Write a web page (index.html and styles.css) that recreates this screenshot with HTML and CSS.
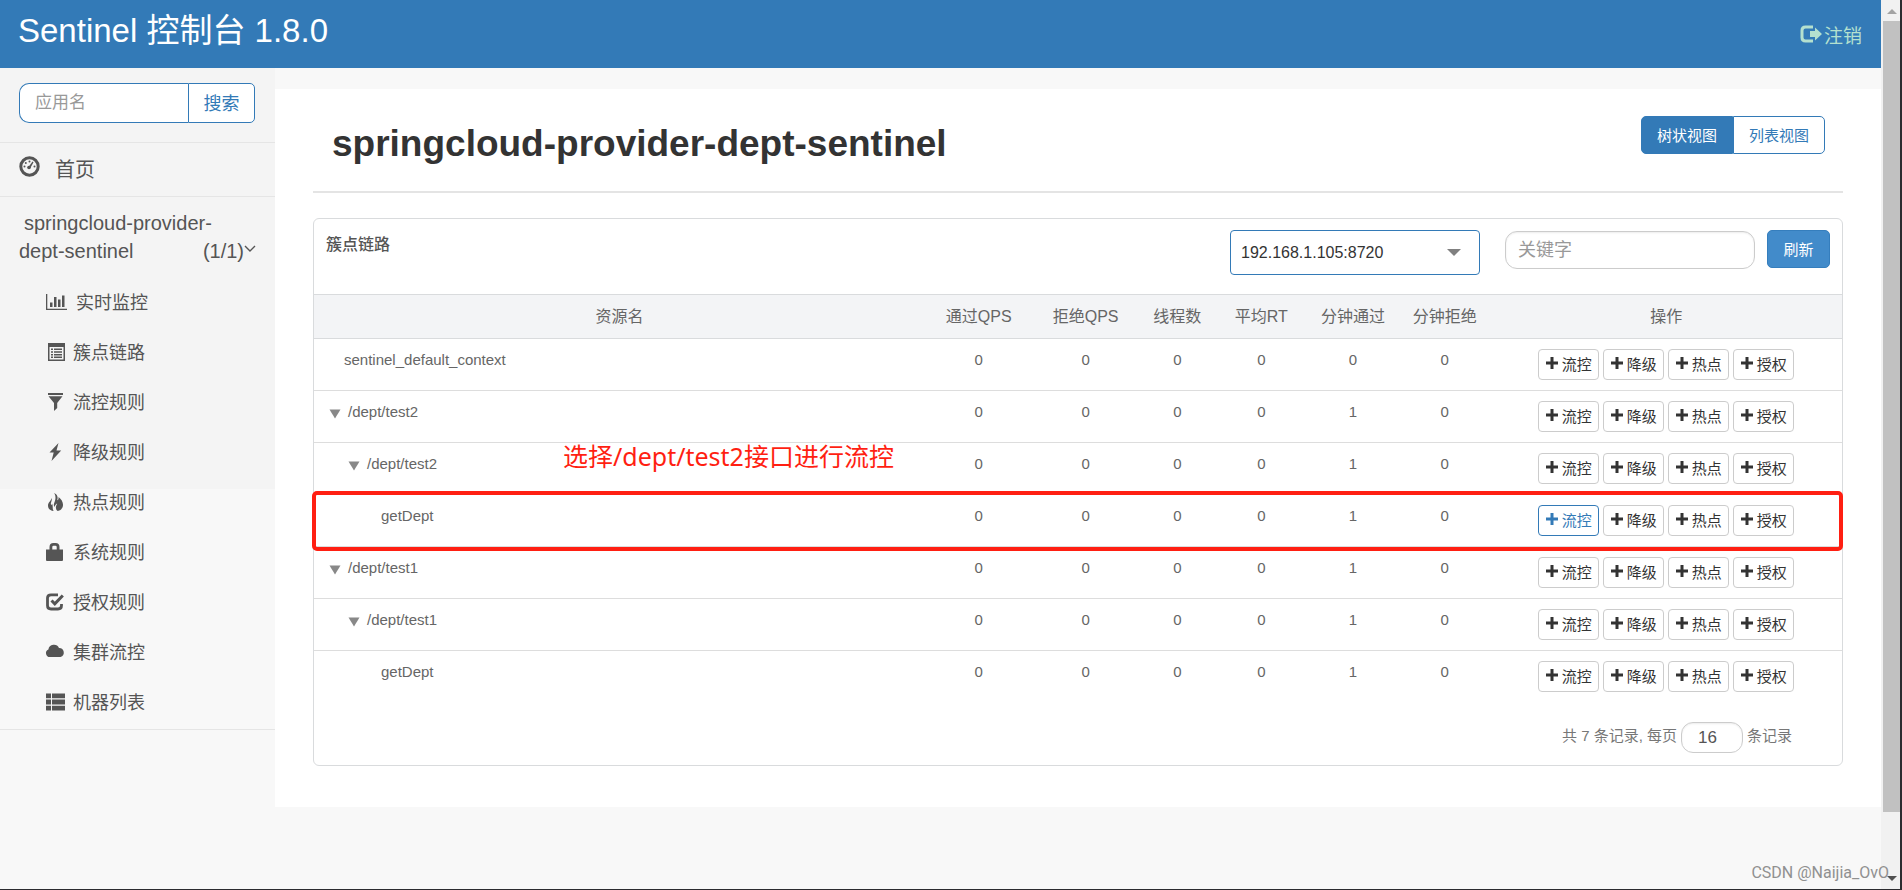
FILE: index.html
```
<!DOCTYPE html>
<html lang="zh-CN">
<head>
<meta charset="utf-8">
<title>Sentinel 控制台</title>
<link rel="stylesheet" href="styles.css">
</head>
<body>
<svg class="sprite" aria-hidden="true">
  <symbol id="plus" viewBox="0 0 12 12"><path d="M4.500 0h3v4.500H12v3H7.500V12h-3V7.500H0v-3h4.500z"/></symbol>
  <symbol id="caret" viewBox="0 0 12 10"><path d="M0.5 0.5h11L6 9.500z"/></symbol>
</svg>
<div class="window">
  <div class="page">
    <header class="topbar">
      <h1 class="brand">Sentinel 控制台 1.8.0</h1>
      <a class="logout" href="#">
        <svg class="logout-icon" viewBox="0 0 22 18"><path d="M13 2H5.500Q2 2 2 5.500v7Q2 16 5.500 16H13" fill="none" stroke="currentColor" stroke-width="3"/><path d="M10 6h5V2.500L22 9l-7 6.500V12h-5z"/></svg>注销</a>
    </header>
    <div class="body">
      <nav class="sidebar">
        <form class="search">
          <input class="search-input" type="text" placeholder="应用名" aria-label="应用名">
          <button class="search-btn" type="button">搜索</button>
        </form>
        <a class="home" href="#">
          <svg class="home-icon" viewBox="0 0 21 21"><circle cx="10.500" cy="10.500" r="8.700" fill="none" stroke="currentColor" stroke-width="3"/><circle cx="10.500" cy="5.500" r="1"/><circle cx="6.800" cy="7" r="1"/><circle cx="5.500" cy="10.500" r="1"/><circle cx="15.500" cy="10.500" r="1"/><circle cx="10" cy="11.500" r="1.800"/><path d="M9.500 11l4-5.500 1 .7-3.300 6z"/></svg><span>首页</span></a>
        <a class="app" href="#">
          <span class="app-name">springcloud-provider-dept-sentinel</span>
          <span class="app-count">(1/1)<svg class="chevron" viewBox="0 0 12 8"><path d="M1 1l5 5 5-5" fill="none" stroke="currentColor" stroke-width="1.400"/></svg></span>
        </a>
        <ul class="menu">
          <li><a href="#"><svg class="icon wide" viewBox="0 0 21 18"><path d="M0 1h1.300v14.700H21V17H0zM4 9.500h2.500V14H4zM8 4h2.500v10H8zM12 6.500h2.500V14H12zM16 2.500h2.500V14H16z"/></svg><span>实时监控</span></a></li>
          <li><a href="#"><svg class="icon" viewBox="0 0 18 18"><path fill-rule="evenodd" d="M1.500 0h17v18h-17zM3 4v12.500h14V4z" transform="translate(.5 0)"/><path d="M5 5.500h2V7H5zM8 5.500h8V7H8zM5 8.200h2v1.500H5zM8 8.200h8v1.500H8zM5 11h2v1.500H5zM8 11h8v1.500H8zM5 13.600h2v1.500H5zM8 13.600h8v1.500H8z"/></svg><span>簇点链路</span></a></li>
          <li><a href="#"><svg class="icon" viewBox="0 0 18 18"><path d="M2 0h15v2H2zM2.500 3.300h14L11.200 10v5L8 18v-8z"/></svg><span>流控规则</span></a></li>
          <li><a href="#"><svg class="icon" viewBox="0 0 18 18"><path d="M12.500 0L3.500 9.600h4.200L5.500 18l9.700-10.500h-4.700z"/></svg><span>降级规则</span></a></li>
          <li><a href="#"><svg class="icon" viewBox="0 0 18 18"><path d="M8.200 0c3.300 1.500 4 4.200 3 7.300 1.300-.2 1.500-1.700 1.300-3.200 3 2 4.700 5.500 4.500 8.200-.2 3.200-2.200 5-5.200 5.700-2.300-1.500-2.600-4-.6-7.500-1.300.5-2.500 2-2.600 3.600-1-1-.9-2.500-.4-4C9.500 7 10.300 3.500 8.200 0zM5.600 5c.7 2.200-.6 4-.8 6 .5 1.400 1.200 1 1.300-.4 1.200 2.600 0 5.200 1.500 7.400C4.500 17.700 2 16 2 12.500 2 9.500 5 8 5.600 5z"/></svg><span>热点规则</span></a></li>
          <li><a href="#"><svg class="icon" viewBox="0 0 18 18"><path fill-rule="evenodd" d="M0 6.500h3.500V4q0-4 4-4h2q4 0 4 4v2.500H17V17q0 1-1 1H1q-1 0-1-1zM6.300 6.500h4.400V4q0-1.200-1.200-1.200h-2Q6.300 2.800 6.300 4z"/></svg><span>系统规则</span></a></li>
          <li><a href="#"><svg class="icon" viewBox="0 0 18 18"><path d="M12 1.800H5Q1.500 1.800 1.500 5v7.500q0 3.500 3.500 3.500h7q3.500 0 3.500-3.500V11" fill="none" stroke="currentColor" stroke-width="2.800"/><path d="M5.500 7.500l3.300 3.300 8-8.300" fill="none" stroke="currentColor" stroke-width="3"/></svg><span>授权规则</span></a></li>
          <li><a href="#"><svg class="icon" viewBox="0 0 18 18"><path d="M4 14a3.900 3.900 0 0 1-1.600-7.500A5.600 5.600 0 0 1 13 5a4.600 4.600 0 0 1 1.500 9z"/></svg><span>集群流控</span></a></li>
          <li><a href="#"><svg class="icon" viewBox="0 0 18 18"><path d="M0 .5h5v4.800H0zM6 .5h13v4.800H6zM0 6.600h5v4.800H0zM6 6.600h13v4.800H6zM0 12.700h5v4.800H0zM6 12.700h13v4.800H6z"/></svg><span>机器列表</span></a></li>
        </ul>
      </nav>
      <main class="content">
        <div class="title-row">
          <h2 class="title">springcloud-provider-dept-sentinel</h2>
          <div class="views">
            <button class="view active" type="button">树状视图</button>
            <button class="view" type="button">列表视图</button>
          </div>
        </div>
        <section class="card">
          <div class="card-head">
            <h3 class="card-title">簇点链路</h3>
            <div class="machine">
              <select class="machine-select" aria-label="机器"><option>192.168.1.105:8720</option></select>
              <svg class="machine-caret" viewBox="0 0 14 7"><path d="M0 0h14L7 7z"/></svg>
            </div>
            <input class="keyword" type="text" placeholder="关键字" aria-label="关键字">
            <button class="refresh" type="button">刷新</button>
          </div>
          <table class="resources">
            <colgroup><col class="c40"><col class="c7"><col class="c7"><col class="c5"><col class="c6"><col class="c6"><col class="c6"><col class="c23"></colgroup>
            <thead>
              <tr><th>资源名</th><th>通过QPS</th><th>拒绝QPS</th><th>线程数</th><th>平均RT</th><th>分钟通过</th><th>分钟拒绝</th><th>操作</th></tr>
            </thead>
            <tbody>
              <tr>
                <td class="name leaf">sentinel_default_context</td><td>0</td><td>0</td><td>0</td><td>0</td><td>0</td><td>0</td>
                <td><div class="ops"><button class="op" type="button"><svg><use href="#plus"/></svg>流控</button><button class="op" type="button"><svg><use href="#plus"/></svg>降级</button><button class="op" type="button"><svg><use href="#plus"/></svg>热点</button><button class="op" type="button"><svg><use href="#plus"/></svg>授权</button></div></td>
              </tr>
              <tr>
                <td class="name"><svg class="caret"><use href="#caret"/></svg>/dept/test2</td><td>0</td><td>0</td><td>0</td><td>0</td><td>1</td><td>0</td>
                <td><div class="ops"><button class="op" type="button"><svg><use href="#plus"/></svg>流控</button><button class="op" type="button"><svg><use href="#plus"/></svg>降级</button><button class="op" type="button"><svg><use href="#plus"/></svg>热点</button><button class="op" type="button"><svg><use href="#plus"/></svg>授权</button></div></td>
              </tr>
              <tr class="noted">
                <td class="name level2"><svg class="caret"><use href="#caret"/></svg>/dept/test2<span class="note">选择/dept/test2接口进行流控</span></td><td>0</td><td>0</td><td>0</td><td>0</td><td>1</td><td>0</td>
                <td><div class="ops"><button class="op" type="button"><svg><use href="#plus"/></svg>流控</button><button class="op" type="button"><svg><use href="#plus"/></svg>降级</button><button class="op" type="button"><svg><use href="#plus"/></svg>热点</button><button class="op" type="button"><svg><use href="#plus"/></svg>授权</button></div></td>
              </tr>
              <tr class="noted">
                <td class="name leaf level3">getDept<span class="frame"></span></td><td>0</td><td>0</td><td>0</td><td>0</td><td>1</td><td>0</td>
                <td><div class="ops"><button class="op current" type="button"><svg><use href="#plus"/></svg>流控</button><button class="op" type="button"><svg><use href="#plus"/></svg>降级</button><button class="op" type="button"><svg><use href="#plus"/></svg>热点</button><button class="op" type="button"><svg><use href="#plus"/></svg>授权</button></div></td>
              </tr>
              <tr>
                <td class="name"><svg class="caret"><use href="#caret"/></svg>/dept/test1</td><td>0</td><td>0</td><td>0</td><td>0</td><td>1</td><td>0</td>
                <td><div class="ops"><button class="op" type="button"><svg><use href="#plus"/></svg>流控</button><button class="op" type="button"><svg><use href="#plus"/></svg>降级</button><button class="op" type="button"><svg><use href="#plus"/></svg>热点</button><button class="op" type="button"><svg><use href="#plus"/></svg>授权</button></div></td>
              </tr>
              <tr>
                <td class="name level2"><svg class="caret"><use href="#caret"/></svg>/dept/test1</td><td>0</td><td>0</td><td>0</td><td>0</td><td>1</td><td>0</td>
                <td><div class="ops"><button class="op" type="button"><svg><use href="#plus"/></svg>流控</button><button class="op" type="button"><svg><use href="#plus"/></svg>降级</button><button class="op" type="button"><svg><use href="#plus"/></svg>热点</button><button class="op" type="button"><svg><use href="#plus"/></svg>授权</button></div></td>
              </tr>
              <tr>
                <td class="name leaf level3">getDept</td><td>0</td><td>0</td><td>0</td><td>0</td><td>1</td><td>0</td>
                <td><div class="ops"><button class="op" type="button"><svg><use href="#plus"/></svg>流控</button><button class="op" type="button"><svg><use href="#plus"/></svg>降级</button><button class="op" type="button"><svg><use href="#plus"/></svg>热点</button><button class="op" type="button"><svg><use href="#plus"/></svg>授权</button></div></td>
              </tr>
            </tbody>
          </table>
          <div class="pager">
            <span>共 7 条记录,</span>
            <label for="page-size">每页</label>
            <input class="page-size" id="page-size" type="text" value="16">
            <span>条记录</span>
          </div>
        </section>
      </main>
    </div>
  </div>
  <div class="scrollbar" aria-hidden="true">
    <svg class="arrow up" viewBox="0 0 10 5"><path d="M0 5h10L5 0z"/></svg>
    <div class="track"><div class="thumb"></div></div>
    <svg class="arrow" viewBox="0 0 10 5"><path d="M0 0h10L5 5z"/></svg>
  </div>
  <div class="watermark">CSDN @Naijia_OvO</div>
</div>
</body>
</html>
```

FILE: styles.css
```
* { box-sizing: border-box; }

body {
  margin: 0;
  color: #555;
  font-family: "Liberation Sans", Arial, "Noto Sans CJK SC", sans-serif;
  font-size: 15px;
}

button, input, select { font-family: inherit; }
a { color: inherit; text-decoration: none; }
svg { fill: currentColor; flex: none; }
.sprite { display: none; }

.window {
  position: relative;
  display: flex;
  height: 100vh;
  overflow: hidden;
  border-right: 2px solid #2b2b2f;
  border-bottom: 1px solid #2b2b2f;
  background: #f8f8f8;
}
.page { flex: 1; display: flex; flex-direction: column; min-width: 0; }

.topbar {
  display: flex;
  justify-content: space-between;
  align-items: center;
  height: 68px;
  padding: 0 19px 0 18px;
  background: #337ab7;
  color: #fff;
}
.brand { margin: 0 0 6px; font-size: 33px; font-weight: 400; line-height: 40px; }
.logout { display: flex; align-items: center; gap: 2px; color: #b4e0cf; font-size: 19px; }
.logout-icon { width: 22px; height: 18px; }

.body { flex: 1; display: flex; align-items: flex-start; }

.sidebar {
  width: 275px;
  flex: none;
  background: linear-gradient(#f4f4f4 421px, #f8f8f8 421px);
  border-bottom: 1px solid #e5e5e5;
}
.search { display: flex; padding: 15px 20px 19px 19px; border-bottom: 1px solid #e5e5e5; }
.search-input {
  flex: 1;
  min-width: 0;
  height: 40px;
  padding: 0 15px;
  border: 1px solid #337ab7;
  border-right: 0;
  border-radius: 10px 0 0 10px;
  font-size: 17px;
}
::placeholder { color: #999; opacity: 1; }
.search-btn {
  width: 67px;
  padding: 0 0 3px;
  border: 1px solid #337ab7;
  border-radius: 0 5px 5px 0;
  background: #fff;
  color: #337ab7;
  font-size: 18px;
}
.home {
  display: flex;
  align-items: center;
  gap: 15px;
  height: 54px;
  padding: 0 19px 2px;
  border-bottom: 1px solid #e5e5e5;
  font-size: 20px;
}
.home-icon { width: 21px; height: 21px; margin-bottom: 4px; }
.app {
  display: flow-root;
  padding: 12px 19px;
  font-size: 20px;
  line-height: 28px;
  text-indent: 5px;
}
.app-count { float: right; display: flex; text-indent: 0; }
.chevron { width: 12px; height: 8px; margin-top: 8px; }

.menu { margin: 0; padding: 0 0 2px; list-style: none; }
.menu a {
  display: flex;
  align-items: center;
  gap: 9px;
  height: 50px;
  padding-left: 46px;
  font-size: 18px;
}
.menu span { padding-bottom: 2px; }
.icon { width: 18px; height: 18px; overflow: visible; }
.icon.wide { width: 21px; }

.content {
  flex: 1;
  min-width: 0;
  margin-top: 21px;
  padding: 0 38px 41px;
  background: #fff;
}
.title-row {
  display: flex;
  justify-content: space-between;
  align-items: flex-start;
  margin-bottom: 25px;
  padding: 27px 18px 20px 19px;
  border-bottom: 2px solid #e4e4e4;
}
.title { margin: 0; color: #333; font-size: 37px; line-height: 55px; }
.views { display: flex; }
.view {
  width: 92px;
  height: 38px;
  padding: 0 0 2px;
  border: 1px solid #337ab7;
  border-radius: 0 5px 5px 0;
  background: #fff;
  color: #337ab7;
  font-size: 15px;
}
.view.active { border-radius: 5px 0 0 5px; background: #337ab7; color: #fff; }

.card { border: 1px solid #d9dbdd; border-radius: 6px; }
.card-head {
  display: flex;
  align-items: flex-start;
  padding: 11px 12px 19px;
}
.card-title { flex: 1; margin: 0; font-size: 16px; font-weight: 500; line-height: 29px; }
.machine { position: relative; width: 250px; margin-right: 25px; }
.machine-select {
  display: block;
  width: 100%;
  height: 45px;
  padding: 0 10px;
  border: 1px solid #337ab7;
  border-radius: 4px;
  background: #fff;
  color: #333;
  font-size: 16px;
  appearance: none;
}
.machine-caret {
  position: absolute;
  top: 19px;
  right: 19px;
  width: 14px;
  height: 7px;
  color: #808080;
  pointer-events: none;
}
.keyword, .page-size {
  border: 1px solid #ccc;
  border-radius: 12px;
  background: #fff;
  box-shadow: inset 0 1px 2px #00000013;
  color: #555;
}
.keyword { width: 250px; height: 38px; margin: 1px 12px 0 0; padding: 0 12px; font-size: 18px; }
.refresh {
  width: 63px;
  height: 38px;
  padding: 0 0 2px;
  border: 1px solid #357ebd;
  border-radius: 5px;
  background: #428bca;
  color: #fff;
  font-size: 15px;
}

.resources { width: 100%; border-collapse: separate; border-spacing: 0; table-layout: fixed; }
.c40 { width: 40%; }
.c7 { width: 7%; }
.c5 { width: 5%; }
.c6 { width: 6%; }
.c23 { width: 23%; }
th {
  height: 45px;
  padding: 0 0 3px;
  border-top: 1px solid #d9dbdd;
  border-bottom: 1px solid #d9dbdd;
  background: #f3f4f6;
  color: #666;
  font-size: 16px;
  font-weight: 400;
}
td {
  padding: 10px 0;
  border-bottom: 1px solid #ddd;
  color: #666;
  line-height: 21px;
  text-align: center;
  vertical-align: top;
}
tbody tr:last-child td { border-bottom: 0; }
.name { padding-left: 15px; text-align: left; }
.leaf { padding-left: 30px; }
.level2 { padding-left: 34px; }
.level3 { padding-left: 67px; }
.caret { width: 12px; height: 10px; margin-right: 7px; vertical-align: -2px; color: #888; }
.ops { display: flex; justify-content: center; gap: 4px; }
.op {
  display: flex;
  align-items: center;
  justify-content: center;
  gap: 4px;
  width: 61px;
  height: 31px;
  padding: 0 0 3px;
  border: 1px solid #ccc;
  border-radius: 4px;
  background: #fff;
  color: #333;
  font-size: 15px;
}
.op svg { width: 12px; height: 12px; }
.op.current { border-color: #337ab7; color: #337ab7; }

.noted { position: relative; }
.note {
  position: absolute;
  top: -5px;
  left: 249px;
  color: #ff1f12;
  font-family: "Noto Sans", "Noto Sans CJK SC", sans-serif;
  font-size: 25px;
  line-height: 36px;
  white-space: nowrap;
}
.frame {
  position: absolute;
  inset: -4px -1px -4px -2px;
  border: 4px solid #ff1f12;
  border-radius: 5px;
  pointer-events: none;
}

.pager {
  display: flex;
  justify-content: flex-end;
  gap: 4px;
  padding: 20px 50px 12px;
  color: #777;
  line-height: 28px;
}
.page-size { width: 62px; height: 31px; padding: 0 16px; font-size: 17px; }

.scrollbar {
  display: flex;
  flex-direction: column;
  align-items: center;
  width: 19px;
  padding: 9px 0 8px 2px;
  background: #f1f1f1;
}
.arrow { width: 10px; height: 5px; color: #505050; }
.arrow.up { color: #a3a3a3; }
.track { flex: 1; width: 100%; padding: 7px 0 64px; }
.thumb { height: 100%; background: #c1c1c1; }

.watermark {
  position: absolute;
  right: 11px;
  bottom: 6px;
  color: #909090;
  font-family: Roboto, sans-serif;
  font-size: 16px;
  line-height: 20px;
}
```
